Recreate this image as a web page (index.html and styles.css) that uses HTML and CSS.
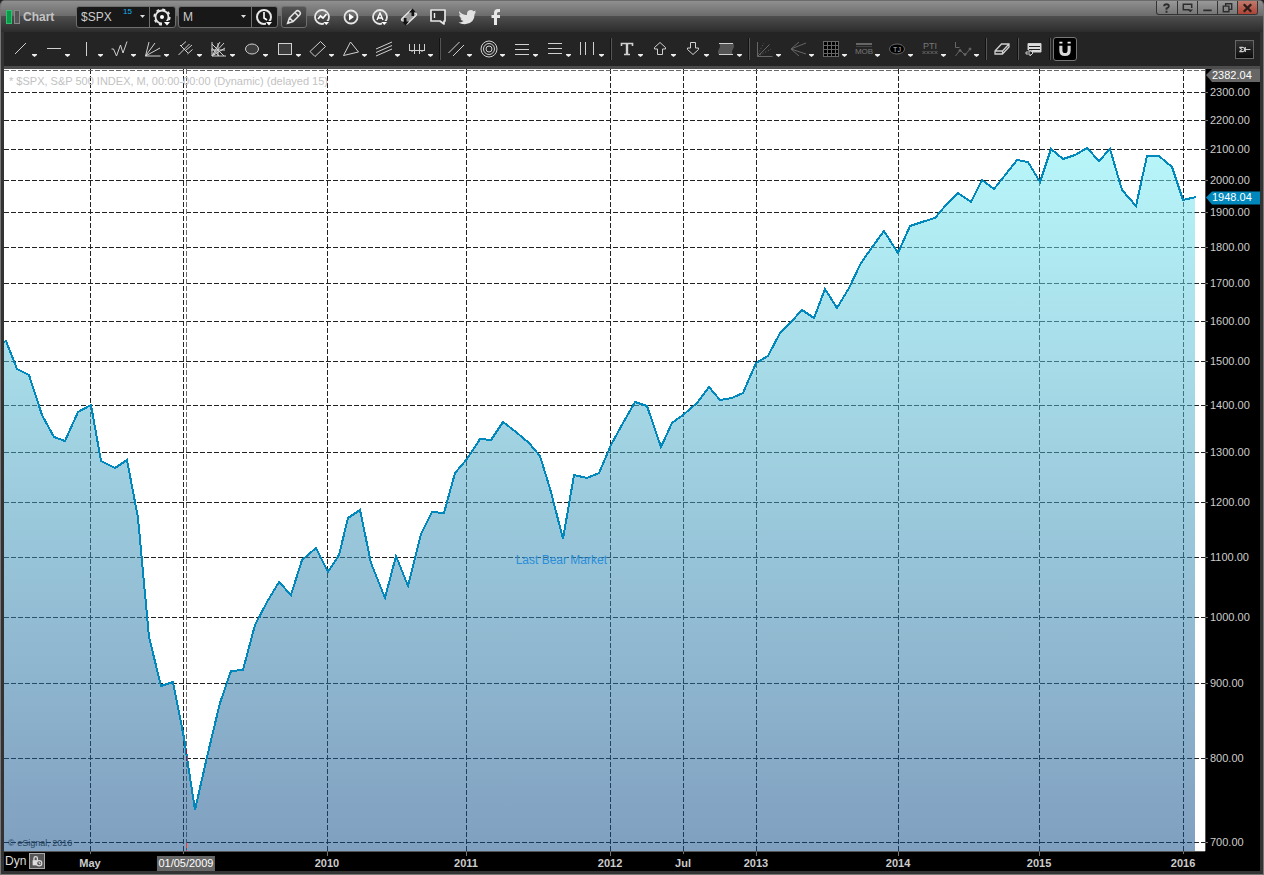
FILE: index.html
```html
<!DOCTYPE html>
<html lang="en">
<head>
<meta charset="utf-8">
<title>Chart</title>
<link rel="stylesheet" href="styles.css">
</head>
<body>
<div class="window">
  <header class="titlebar">
    <svg class="logo" viewBox="0 0 14 14" aria-hidden="true"><rect x=".5" y=".5" width="5" height="13" fill="#0a9a48" stroke="#2fc070"/><rect x="8.500" y=".5" width="5" height="13" fill="#555" stroke="#888"/></svg>
    <h1 class="title">Chart</h1>

    <div class="field symbol-field">
      <input class="symbol" type="text" value="$SPX" aria-label="Symbol">
      <span class="delay">15</span>
      <button class="drop" aria-label="Recent symbols"><svg viewBox="0 0 5 3"><path d="M0 0h5L2.500 3z"/></svg></button>
      <button class="field-btn" aria-label="Symbol settings"><svg viewBox="0 0 25 20"><circle cx="12" cy="10" r="6.500" fill="none" stroke="#e6e6e6" stroke-width="1.800"/><circle cx="12" cy="10" r="7.800" fill="none" stroke="#e6e6e6" stroke-width="1.600" stroke-dasharray="3 3.130"/><circle cx="12" cy="10" r="2" fill="#fff"/><path d="M12 14h9v5h-9z" fill="#181818"/><path d="M14 15h6l-3 3.500z" fill="#fff"/></svg></button>
    </div>
    <div class="field interval-field">
      <select class="interval" aria-label="Interval"><option>M</option><option>W</option><option>D</option></select>
      <svg class="select-caret" viewBox="0 0 5 3" aria-hidden="true"><path d="M0 0h5L2.500 3z"/></svg>
      <button class="field-btn" aria-label="Time template"><svg viewBox="0 0 25 20"><circle cx="12" cy="10" r="7" fill="none" stroke="#e6e6e6" stroke-width="2"/><path d="M12 5v6l3 2" fill="none" stroke="#fff" stroke-width="1.600"/><path d="M14 14h7v5h-7z" fill="#181818"/><path d="M14 15h6l-3 3.500z" fill="#fff"/></svg></button>
    </div>
    <button class="pencil" aria-label="Drawing tools"><svg viewBox="0 0 26 22"><path d="M6 18l2-6 7-7q2-2 4 0t0 4l-7 7zM8 12l4 4M14 6l4 4" fill="none" stroke="#e2e2e2" stroke-width="1.700"/><path d="M6 18l1-3 2 2z" fill="#eee"/></svg></button>

    <nav class="quick" aria-label="Quick actions">
      <button aria-label="Studies"><svg viewBox="0 0 20 20"><circle cx="10" cy="10" r="7" fill="none" stroke="#e6e6e6" stroke-width="1.800"/><path d="M6 12l2.500-3 2.500 2 3.500-4" fill="none" stroke="#fff" stroke-width="1.700"/><path d="M12 14h6v4h-6z" fill="#444"/><path d="M11.500 15h5.500l-2.700 3z" fill="#fff"/></svg></button>
      <button aria-label="Replay"><svg viewBox="0 0 20 20"><circle cx="10" cy="10" r="6.500" fill="none" stroke="#e6e6e6" stroke-width="1.800"/><path d="M8 6.500v7l5-3.500z" fill="#fff"/></svg></button>
      <button aria-label="Alerts"><svg viewBox="0 0 20 20"><circle cx="10" cy="10" r="7" fill="none" stroke="#e6e6e6" stroke-width="1.800"/><path d="M7 13l3-7 3 7M8 11h4" fill="none" stroke="#fff" stroke-width="1.400"/><path d="M12 14h6v4h-6z" fill="#444"/><path d="M11.500 15h5.500l-2.700 3z" fill="#fff"/></svg></button>
      <button aria-label="Link"><svg viewBox="0 0 20 20"><path d="M3 11.500l8.500-8q1-1 2 0l3.500 3q1 1 0 2l-8.500 8q-1 1-2 0l-3.500-3q-1-1 0-2z" fill="#999" stroke="#e8e8e8" stroke-width="1.400"/><path d="M10.500 9h2V5.500H10l3.500-4 3.500 4h-2V9zM9.500 11h-2v3.500H10l-3.500 4-3.500-4h2V11z" fill="#111" transform="translate(0 0)"/></svg></button>
      <button aria-label="Comment"><svg viewBox="0 0 20 20"><path d="M3 3h14v11h-1v3l-4-3H3z" fill="#333" stroke="#e6e6e6" stroke-width="1.700" stroke-linejoin="round"/><path d="M6.500 6v5" stroke="#eee" stroke-width="1.400"/></svg></button>
      <button aria-label="Twitter"><svg viewBox="0 0 20 20"><path d="M2 4q3 4 8 4-.5-4.500 3.500-5 2 0 3 1.200l2.400-.8-1.200 2.100 1.500-.2-1.600 1.800q0 9-8.600 10-4.500.4-7.500-1.700 3 0 5-1.500-2.500-.4-3.200-2.500h1.500Q2 10 2.200 7.500l1.400.5Q1.500 6.500 2 4z" fill="#e2e2e2"/></svg></button>
      <button aria-label="Facebook"><svg viewBox="0 0 20 20"><path d="M8 18v-7H5.500V8H8V6q0-4 4-4h2v3h-1.500q-1.500 0-1.500 1.500V8h3v3h-3v7z" fill="#e8e8e8"/></svg></button>
    </nav>

    <div class="controls">
      <button aria-label="Help"><svg viewBox="0 0 20 15"><path d="M7.500 5.500q0-2 2.500-2t2.500 2q0 1.500-2.500 2.500v1.500M10 10.500v2" fill="none" stroke="#2c2c2c" stroke-width="2"/></svg></button>
      <button aria-label="Window menu"><svg viewBox="0 0 20 15"><path d="M12 9.500H5.500v-6h9v4" fill="none" stroke="#2c2c2c" stroke-width="1.600"/><path d="M10 9h6l-3 3z" fill="#2c2c2c"/></svg></button>
      <button aria-label="Minimize"><svg viewBox="0 0 20 15"><path d="M5.500 10h9" stroke="#2c2c2c" stroke-width="2"/></svg></button>
      <button aria-label="Restore"><svg viewBox="0 0 20 15"><path d="M5.500 5.500h6v6h-6zM8 5V3h6.500v6H12" fill="none" stroke="#2c2c2c" stroke-width="1.500"/></svg></button>
      <button class="close" aria-label="Close"><svg viewBox="0 0 20 15"><path d="M6 3.500l8 8M14 3.500l-8 8" stroke="#2c1c1a" stroke-width="2.600"/></svg></button>
    </div>
  </header>

  <div class="toolbar" role="toolbar" aria-label="Line tools">
    <button class="tool" aria-label="Trend line"><svg viewBox="0 0 33 34"><path d="M7 22L18 11"/><path class="caret" d="M24 22h5v1l-2.500 2-2.500-2z"/></svg></button>
    <button class="tool" aria-label="Horizontal line"><svg viewBox="0 0 33 34"><path d="M6 16.500h14"/><path class="caret" d="M24 22h5v1l-2.500 2-2.500-2z"/></svg></button>
    <button class="tool" aria-label="Vertical line"><svg viewBox="0 0 33 34"><path d="M12.500 10v14"/><path class="caret" d="M24 22h5v1l-2.500 2-2.500-2z"/></svg></button>
    <button class="tool" aria-label="Zigzag"><svg viewBox="0 0 33 34"><path d="M4.500 17h2l3 7 4-11 2.500 8L20 9.500"/><path class="caret" d="M24 22h5v1l-2.500 2-2.500-2z"/></svg></button>
    <button class="tool" aria-label="Speed lines"><svg viewBox="0 0 33 34"><path d="M5.500 24L9 10M5.500 24L15 11M5.500 24L20 16M5.500 24h15"/><path class="caret" d="M24 22h5v1l-2.500 2-2.500-2z"/></svg></button>
    <button class="tool" aria-label="Pitchfork"><svg viewBox="0 0 33 34"><path d="M5.500 23l11-11M7 13l8 8M8 14l5-4.500M12 19l7-6M14.500 22l5-4.500"/><path class="caret" d="M24 22h5v1l-2.500 2-2.500-2z"/></svg></button>
    <button class="tool" aria-label="Gann fan"><svg viewBox="0 0 33 34"><path d="M6 10v14h14M6 24L18 11M6 24l8-14M6 24l13-8M6 12l12 12M5 18h14M12 11v13M6 16l7 8"/><path class="caret" d="M24 22h5v1l-2.500 2-2.500-2z"/></svg></button>
    <button class="tool" aria-label="Ellipse"><svg viewBox="0 0 33 34"><ellipse class="shaded" cx="13" cy="17" rx="6.500" ry="5"/><path class="caret" d="M24 22h5v1l-2.500 2-2.500-2z"/></svg></button>
    <button class="tool" aria-label="Rectangle"><svg viewBox="0 0 33 34"><rect class="shaded" x="6.500" y="11.500" width="13" height="11"/><path class="caret" d="M24 22h5v1l-2.500 2-2.500-2z"/></svg></button>
    <button class="tool" aria-label="Rotated rectangle"><svg viewBox="0 0 33 34"><path d="M5 19.500L15.500 9.500l5 5L10 24.500z"/><path class="caret" d="M24 22h5v1l-2.500 2-2.500-2z"/></svg></button>
    <button class="tool" aria-label="Triangle"><svg viewBox="0 0 33 34"><path d="M5.500 23.500L12.500 10l8 10z"/><path class="caret" d="M24 22h5v1l-2.500 2-2.500-2z"/></svg></button>
    <button class="tool" aria-label="Regression lines"><svg viewBox="0 0 33 34"><path d="M5 17l16-7M5 20.500l16-7M5 24l16-7"/><path class="caret" d="M24 22h5v1l-2.500 2-2.500-2z"/></svg></button>
    <button class="tool" aria-label="Cycle lines"><svg viewBox="0 0 33 34"><path d="M5.500 12v7M5 18.500h16M20.500 12v7M10.500 12v10M15.500 12v10M8 18v2M18 18v2"/><path class="caret" d="M24 22h5v1l-2.500 2-2.500-2z"/></svg></button>
    <span class="sep"></span>
    <button class="tool" aria-label="Parallel lines"><svg viewBox="0 0 33 34"><path d="M5.500 21l11-11M10 24l11-11"/><path class="caret" d="M24 22h5v1l-2.500 2-2.500-2z"/></svg></button>
    <button class="tool" aria-label="Fibonacci circles"><svg viewBox="0 0 33 34"><circle cx="13" cy="17" r="8"/><circle cx="13" cy="17" r="5.500"/><circle cx="13" cy="17" r="3"/><path class="caret" d="M24 22h5v1l-2.500 2-2.500-2z"/></svg></button>
    <button class="tool" aria-label="Fibonacci retracement"><svg viewBox="0 0 33 34"><path d="M6 12.500h14M6 17.500h14M6 22.500h14"/><path class="caret" d="M24 22h5v1l-2.500 2-2.500-2z"/></svg></button>
    <button class="tool" aria-label="Fibonacci extension"><svg viewBox="0 0 33 34"><path d="M6 11.500h14M6 16.500h14M6 21.500h14"/><path class="caret" d="M24 22h5v1l-2.500 2-2.500-2z"/></svg></button>
    <button class="tool" aria-label="Fibonacci time"><svg viewBox="0 0 33 34"><path d="M5.500 10v13M10.500 10v13M18.500 10v13"/><path class="caret" d="M24 22h5v1l-2.500 2-2.500-2z"/></svg></button>
    <span class="sep"></span>
    <button class="tool" aria-label="Text"><svg viewBox="0 0 33 34"><path d="M7.500 14v-2.500h11V14M10 22.500h6" stroke-width="1.600"/><path d="M13 12v10" stroke-width="2.400"/><path class="caret" d="M24 22h5v1l-2.500 2-2.500-2z"/></svg></button>
    <button class="tool" aria-label="Up arrow"><svg viewBox="0 0 33 34"><path d="M13 10.500l5.500 5v1.500h-3v5.500h-5v-5.500h-3v-1.500z"/><path class="caret" d="M24 22h5v1l-2.500 2-2.500-2z"/></svg></button>
    <button class="tool" aria-label="Down arrow"><svg viewBox="0 0 33 34"><path d="M13 22.500l5.500-5V16h-3v-5.500h-5V16h-3v1.500z"/><path class="caret" d="M24 22h5v1l-2.500 2-2.500-2z"/></svg></button>
    <button class="tool" aria-label="Highlight"><svg viewBox="0 0 33 34"><path d="M6 11h14q2 3 0 6t0 6H6q-2-3 0-6t0-6z" fill="#555" stroke="none"/><path d="M6 11.500h14M6 22.500h14"/><path class="caret" d="M24 22h5v1l-2.500 2-2.500-2z"/></svg></button>
    <span class="sep"></span>
    <button class="tool dim" aria-label="Gann angles"><svg viewBox="0 0 33 34"><path d="M5.500 10v14.500h15M5.500 24.500l12-12"/><path d="M6 22l6-11M8 23l11-6" stroke-dasharray="1 2"/><path class="caret" d="M24 22h5v1l-2.500 2-2.500-2z"/></svg></button>
    <button class="tool dim" aria-label="Fan lines"><svg viewBox="0 0 33 34"><path d="M14 10l-8 7 8 7M6 17l15-6M6 17l15 5"/><path class="caret" d="M24 22h5v1l-2.500 2-2.500-2z"/></svg></button>
    <button class="tool dim" aria-label="Gann box"><svg viewBox="0 0 33 34"><rect x="5.500" y="9.500" width="15" height="15" fill="#000"/><path d="M9.500 10v14M13.500 10v14M17.500 10v14M6 13.500h14M6 17.500h14M6 21.500h14"/><path class="caret" d="M24 22h5v1l-2.500 2-2.500-2z"/></svg></button>
    <button class="tool dim" aria-label="Make or break"><svg viewBox="0 0 33 34"><path d="M5 12h16" stroke-width="2"/><path d="M5 14.500h16" stroke="#444"/><text x="13" y="22" font-size="8">MOB</text><path class="caret" d="M24 22h5v1l-2.500 2-2.500-2z"/></svg></button>
    <button class="tool dim" aria-label="Tom Joseph ellipse"><svg viewBox="0 0 33 34"><ellipse cx="13" cy="17" rx="7.500" ry="5" fill="#000"/><text x="13" y="20" font-size="7" class="lit">TJ</text><path class="caret" d="M24 22h5v1l-2.500 2-2.500-2z"/></svg></button>
    <button class="tool dim" aria-label="Profit taking index"><svg viewBox="0 0 33 34"><text x="13" y="17" font-size="9">PTI</text><path d="M5.500 19l3 3m0-3l-3 3M9.500 19l3 3m0-3l-3 3M13.500 19l3 3m0-3l-3 3M17.500 19l3 3m0-3l-3 3"/><path class="caret" d="M24 22h5v1l-2.500 2-2.500-2z"/></svg></button>
    <button class="tool dim" aria-label="Elliott labels"><svg viewBox="0 0 33 34"><path d="M5.500 10v5.500h4M5.500 24l4.500-6 5 5 5-6"/><circle cx="10" cy="18.500" r="1" fill="#666"/><circle cx="15" cy="22.500" r="1" fill="#666"/><circle cx="20" cy="17" r="1" fill="#666"/><path class="caret" d="M24 22h5v1l-2.500 2-2.500-2z"/></svg></button>
    <span class="sep"></span>
    <button class="tool narrow" aria-label="Erase"><svg viewBox="0 0 26 34"><path d="M6 19l6.500-7h7.500v3l-6.500 7H6zM6 19h7.500l6.500-7M13.500 19v3" stroke-width="1.300"/></svg></button>
    <span class="sep"></span>
    <button class="tool narrow" aria-label="Note"><svg viewBox="0 0 26 34"><path d="M7 11.500h13v8.500H11v-2H7z" fill="#ddd"/><path d="M8 14.500h11M8 17.500h11" stroke="#222"/><path d="M5 20h4v-2l3 3-3 3v-2H5z" fill="#222"/></svg></button>
    <span class="sep"></span>
    <button class="magnet" aria-label="Magnet" aria-pressed="true"><svg viewBox="0 0 24 24"><path d="M7.500 8.500v5q0 4.500 4.500 4.500t4.500-4.500v-5" fill="none" stroke="#d8d8d8" stroke-width="3.400"/><path d="M5.800 5h3.400M14.800 5h3.400" stroke="#eee" stroke-width="2"/></svg></button>
    <button class="pin" aria-label="Pin toolbar"><svg viewBox="0 0 20 20"><path d="M4 7.500l3 2.500-3 2.500M4 7.500h4l2 1v3l-2 1H4M11 7v6M11 10h6" fill="none" stroke="#ccc" stroke-width="1.300"/></svg></button>
  </div>

  <main class="chart">
    <svg class="plot" role="img" aria-label="S&amp;P 500 index, monthly">
      <defs>
        <linearGradient id="area-fill" x1="0" y1="0" x2="0" y2="1">
          <stop offset="0" stop-color="#79eef5" stop-opacity=".53"/>
          <stop offset="1" stop-color="#0f4b88" stop-opacity=".53"/>
        </linearGradient>
      </defs>
      <svg viewBox="4 69 1201 782" width="100%" height="100%" preserveAspectRatio="none" shape-rendering="crispEdges">
        <path class="grid" d="M4 92.500H1205M4 120.500H1205M4 149.500H1205M4 180.500H1205M4 212.500H1205M4 247.500H1205M4 283.500H1205M4 321.500H1205M4 361.500H1205M4 405.500H1205M4 452.500H1205M4 502.500H1205M4 557.500H1205M4 617.500H1205M4 683.500H1205M4 758.500H1205M4 842.500H1205"/>
        <path class="grid" d="M90.500 69V851M183.500 69V851M327.500 69V851M466.500 69V851M610.500 69V851M683.500 69V851M756.500 69V851M898.500 69V851M1039.500 69V851M1183.500 69V851"/>
        <path class="grid cursor" d="M4 70.500H1205M186.500 69V851"/>
        <path fill="url(#area-fill)" d="M4 851V342L6 341L17 369L29 375L42 415L54 437L65 441L78 412L91 405L101 461L115 468L127 460L138 518L149 637L161 686L173 682L184 738L195 810L207 757L220 703L231 671L243 670L255 625L267 602L279 582L291 595L302 560L316 548L328 572L339 555L348 518L360 510L371 563L385 598L396 556L408 586L421 534L432 512L444 513L455 473L467 459L480 439L491 440L503 422L516 432L529 443L540 456L551 492L563 539L574 475L587 478L599 473L611 445L623 423L635 402L647 406L661 447L672 423L683 415L697 403L709 387L720 400L732 398L743 393L756 363L768 356L780 333L791 322L802 310L814 318L825 289L837 308L849 288L861 263L873 246L884 231L898 253L910 226L922 222L935 218L946 205L958 193L971 202L982 180L994 189L1006 174L1017 160L1028 162L1040 182L1051 149L1063 159L1075 155L1087 148L1099 161L1110 149L1122 190L1136 206L1147 156L1159 156L1172 167L1183 200L1195 197V851z"/>
        <path class="price" d="M4 342L6 341L17 369L29 375L42 415L54 437L65 441L78 412L91 405L101 461L115 468L127 460L138 518L149 637L161 686L173 682L184 738L195 810L207 757L220 703L231 671L243 670L255 625L267 602L279 582L291 595L302 560L316 548L328 572L339 555L348 518L360 510L371 563L385 598L396 556L408 586L421 534L432 512L444 513L455 473L467 459L480 439L491 440L503 422L516 432L529 443L540 456L551 492L563 539L574 475L587 478L599 473L611 445L623 423L635 402L647 406L661 447L672 423L683 415L697 403L709 387L720 400L732 398L743 393L756 363L768 356L780 333L791 322L802 310L814 318L825 289L837 308L849 288L861 263L873 246L884 231L898 253L910 226L922 222L935 218L946 205L958 193L971 202L982 180L994 189L1006 174L1017 160L1028 162L1040 182L1051 149L1063 159L1075 155L1087 148L1099 161L1110 149L1122 190L1136 206L1147 156L1159 156L1172 167L1183 200L1196 197"/>
        <path class="marker" d="M186.500 843V851"/>
        <path class="marker dark" d="M186.500 749V762"/>
      </svg>
      <text class="legend" x="5" y="16">* $SPX, S&amp;P 500 INDEX, M, 00:00-00:00 (Dynamic) (delayed 15)</text>
      <text class="note" x="42.600%" y="63.300%">Last Bear Market</text>
      <text class="copyright" x="4" y="100%" dy="-5">© eSignal, 2016</text>
    </svg>

    <svg class="price-axis" aria-label="Price axis">
      <g class="ticks">
        <svg y="2.940%" overflow="visible"><path d="M0 .5h2"/><text x="4" y="4">2300.00</text></svg>
        <svg y="6.520%" overflow="visible"><path d="M0 .5h2"/><text x="4" y="4">2200.00</text></svg>
        <svg y="10.230%" overflow="visible"><path d="M0 .5h2"/><text x="4" y="4">2100.00</text></svg>
        <svg y="14.190%" overflow="visible"><path d="M0 .5h2"/><text x="4" y="4">2000.00</text></svg>
        <svg y="18.290%" overflow="visible"><path d="M0 .5h2"/><text x="4" y="4">1900.00</text></svg>
        <svg y="22.760%" overflow="visible"><path d="M0 .5h2"/><text x="4" y="4">1800.00</text></svg>
        <svg y="27.370%" overflow="visible"><path d="M0 .5h2"/><text x="4" y="4">1700.00</text></svg>
        <svg y="32.230%" overflow="visible"><path d="M0 .5h2"/><text x="4" y="4">1600.00</text></svg>
        <svg y="37.340%" overflow="visible"><path d="M0 .5h2"/><text x="4" y="4">1500.00</text></svg>
        <svg y="42.970%" overflow="visible"><path d="M0 .5h2"/><text x="4" y="4">1400.00</text></svg>
        <svg y="48.980%" overflow="visible"><path d="M0 .5h2"/><text x="4" y="4">1300.00</text></svg>
        <svg y="55.370%" overflow="visible"><path d="M0 .5h2"/><text x="4" y="4">1200.00</text></svg>
        <svg y="62.400%" overflow="visible"><path d="M0 .5h2"/><text x="4" y="4">1100.00</text></svg>
        <svg y="70.080%" overflow="visible"><path d="M0 .5h2"/><text x="4" y="4">1000.00</text></svg>
        <svg y="78.520%" overflow="visible"><path d="M0 .5h2"/><text x="4" y="4">900.00</text></svg>
        <svg y="88.110%" overflow="visible"><path d="M0 .5h2"/><text x="4" y="4">800.00</text></svg>
        <svg y="98.850%" overflow="visible"><path d="M0 .5h2"/><text x="4" y="4">700.00</text></svg>
      </g>
      <svg class="flag" y=".770%" overflow="visible"><path fill="#666" d="M0 0l6-6h49V7H6z"/><text x="6" y="4">2382.04</text></svg>
      <svg class="flag" y="16.430%" overflow="visible"><path fill="#0088bc" d="M0 0l6-6h49V7H6z"/><text x="6" y="4">1948.04</text></svg>
    </svg>

    <div class="time-axis">
      <svg class="dates" aria-label="Time axis">
        <g class="ticks">
          <svg x="7.160%" overflow="visible"><path d="M.5 0v2"/><text y="15">May</text></svg>
          <svg x="14.900%" overflow="visible"><path d="M.5 0v2"/></svg>
          <svg x="26.890%" overflow="visible"><path d="M.5 0v4"/><text y="15">2010</text></svg>
          <svg x="38.470%" overflow="visible"><path d="M.5 0v4"/><text y="15">2011</text></svg>
          <svg x="50.460%" overflow="visible"><path d="M.5 0v4"/><text y="15">2012</text></svg>
          <svg x="56.540%" overflow="visible"><path d="M.5 0v2"/><text y="15">Jul</text></svg>
          <svg x="62.610%" overflow="visible"><path d="M.5 0v4"/><text y="15">2013</text></svg>
          <svg x="74.440%" overflow="visible"><path d="M.5 0v4"/><text y="15">2014</text></svg>
          <svg x="86.180%" overflow="visible"><path d="M.5 0v4"/><text y="15">2015</text></svg>
          <svg x="98.170%" overflow="visible"><path d="M.5 0v2"/><text y="15">2016</text></svg>
        </g>
        <svg class="date-flag" x="15.150%" overflow="visible"><rect x="-29" y="4" width="58" height="15"/><text y="15">01/05/2009</text></svg>
      </svg>
      <div class="mode">
        <span>Dyn</span>
        <button class="lock" aria-label="Lock time scale"><svg viewBox="0 0 16 16"><path d="M3 7h6v6H3z" fill="#ddd"/><path d="M4.500 7V5q0-2 2-2t2 2v2" fill="none" stroke="#ddd" stroke-width="1.500"/><circle cx="10.500" cy="10.500" r="3" fill="#555" stroke="#ddd" stroke-width="1.300"/><path d="M10.500 9v2h1.500" fill="none" stroke="#eee"/></svg></button>
      </div>
    </div>
  </main>
</div>
</body>
</html>
```
FILE: styles.css
```css
* {
  box-sizing: border-box;
}

body {
  margin: 0;
  background: #222;
  font-family: "Liberation Sans", Arial, sans-serif;
  font-size: 12px;
  color: #ddd;
}

button,
input,
select {
  margin: 0;
  padding: 0;
  border: 0;
  background: none;
  color: inherit;
  font: inherit;
}

svg {
  display: block;
}

.window {
  display: flex;
  flex-direction: column;
  height: 100vh;
  padding-bottom: 3px;
  border: 1px solid #777;
  border-top: 0;
  border-radius: 5px 5px 0 0;
  background: #333;
  overflow: hidden;
}

/* Title bar */

.titlebar {
  display: flex;
  flex: none;
  align-items: center;
  height: 32px;
  padding-left: 5px;
  border-top: 1px solid #6a6a6a;
  background: linear-gradient(#8f8f8f, #6b6b6b 15px, #4e4e4e 15px, #2c2c2c);
}

.logo {
  width: 14px;
  height: 14px;
  margin-right: 3px;
}

.title {
  width: 53px;
  margin: 0;
  color: #c4c4c4;
  font-size: 12px;
  line-height: 20px;
}

.field {
  display: flex;
  height: 22px;
  border: 1px solid #6e6e6e;
  border-radius: 3px;
  background: #181818;
}

.symbol-field {
  width: 100px;
  margin-right: 2px;
}

.interval-field {
  width: 100px;
  margin-right: 3px;
}

.symbol {
  width: 46px;
  padding-left: 4px;
  color: #ccc;
}

.delay {
  width: 12px;
  color: #18b0f0;
  font-size: 8px;
  line-height: 10px;
}

.drop {
  display: grid;
  flex: 1;
  place-items: center;
  fill: #ddd;
}

.drop svg {
  width: 5px;
  height: 3px;
}

.field-btn {
  width: 26px;
  border-left: 1px solid #6e6e6e;
}

.field-btn svg {
  width: 25px;
  height: 20px;
}

.interval {
  flex: 1;
  padding-left: 4px;
  appearance: none;
  color: #ccc;
}

.select-caret {
  align-self: center;
  width: 5px;
  height: 3px;
  margin: 0 5px 0 -10px;
  fill: #ddd;
  pointer-events: none;
}

.pencil {
  width: 26px;
  height: 22px;
  border: 1px solid #6e6e6e;
  border-radius: 3px;
  background: linear-gradient(#555, #2c2c2c);
}

.pencil svg {
  width: 24px;
  height: 20px;
}

.quick {
  display: flex;
  gap: 9px;
  margin-left: 5px;
}

.quick svg {
  width: 20px;
  height: 20px;
}

.controls {
  display: flex;
  align-self: flex-start;
  height: 14px;
  margin: 0 5px 0 auto;
  border: 1px solid #333;
  border-top: 0;
  border-radius: 0 0 3px 3px;
  background: linear-gradient(#999, #777);
  overflow: hidden;
}

.controls button {
  width: 20px;
  border-left: 1px solid #333;
}

.controls button:first-child {
  border-left: 0;
}

.controls svg {
  width: 19px;
  height: 14px;
}

.controls .close {
  background: linear-gradient(#c07a6c, #ad4436);
}

/* Drawing toolbar */

.toolbar {
  display: flex;
  flex: none;
  align-items: center;
  height: 34px;
  margin: 0 3px;
  padding: 0 6px 0 4px;
  background: #242424;
}

.tool {
  flex: none;
  width: 33px;
  height: 34px;
}

.tool svg {
  width: 33px;
  height: 34px;
  fill: none;
  stroke: #d0d0d0;
}

.tool.narrow,
.tool.narrow svg {
  width: 26px;
}

.tool.dim svg {
  stroke: #666;
}

.tool text {
  fill: #777;
  stroke: none;
  text-anchor: middle;
}

.tool text.lit {
  fill: #bbb;
}

.tool .shaded {
  fill: #3c3c3c;
}

.tool svg .caret {
  fill: #eee;
  stroke: none;
}

.sep {
  flex: none;
  width: 2px;
  height: 22px;
  margin: 0 2px;
  border-left: 1px solid #111;
  background: #555;
}

.magnet {
  flex: none;
  width: 24px;
  height: 24px;
  border: 1px solid #777;
  border-radius: 3px;
  background: #000;
}

.magnet svg {
  width: 22px;
  height: 22px;
}

.pin {
  width: 19px;
  height: 19px;
  margin-left: auto;
  border: 1px solid #666;
  background: linear-gradient(#333, #0c0c0c);
}

.pin svg {
  width: 17px;
  height: 17px;
}

/* Chart */

.chart {
  display: grid;
  flex: 1;
  grid-template-columns: 1fr 55px;
  grid-template-rows: minmax(0, 1fr) 20px;
  min-height: 0;
  margin: 0 3px;
  border-top: 3px solid #4c4c4c;
  background: #000;
}

.plot {
  width: 100%;
  height: 100%;
  background: #fff;
}

.grid,
.price,
.marker {
  fill: none;
  vector-effect: non-scaling-stroke;
}

.grid {
  stroke: #222;
  stroke-dasharray: 5 2;
}

.grid.cursor {
  stroke: #6a6a6a;
}

.price {
  stroke: #0088bc;
  stroke-width: 2px;
}

.marker {
  stroke: #f03a2a;
  stroke-dasharray: 5 2;
}

.marker.dark {
  stroke: #a01030;
}

.legend {
  fill: #c2c2c2;
  font-size: 11px;
}

.note {
  fill: #2a8ed8;
  font-size: 12px;
}

.copyright {
  fill: #27455f;
  font-size: 9px;
}

.price-axis {
  width: 100%;
  height: 100%;
  border-left: 1px solid #555;
  fill: #ccc;
  font-size: 11px;
}

.ticks path {
  stroke: #777;
}

.flag text {
  fill: #fff;
}

.time-axis {
  display: grid;
  border-top: 1px solid #555;
}

.dates,
.mode {
  grid-area: 1 / 1;
}

.dates {
  width: 100%;
  height: 19px;
  overflow: visible;
  fill: #ccc;
  font-size: 11px;
  font-weight: bold;
  text-anchor: middle;
}

.date-flag {
  font-weight: normal;
}

.date-flag rect {
  fill: #666;
}

.date-flag text {
  fill: #fff;
}

.mode {
  display: flex;
  gap: 3px;
  justify-self: start;
  padding: 1px 0 0 1px;
  line-height: 16px;
}

.lock {
  width: 16px;
  height: 16px;
  border: 1px solid #aaa;
  background: #555;
}

.lock svg {
  width: 14px;
  height: 14px;
}
```
